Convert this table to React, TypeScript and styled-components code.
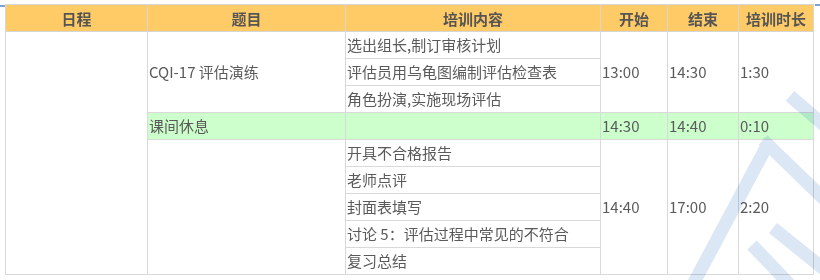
import React from 'react';
import styled, { createGlobalStyle } from 'styled-components';

type Session = {
  topic: string;
  items: string[];
  start: string;
  end: string;
  length: string;
  isBreak?: boolean;
};

const sessions: Session[] = [
  {
    topic: 'CQI-17 评估演练',
    items: ['选出组长,制订审核计划', '评估员用乌龟图编制评估检查表', '角色扮演,实施现场评估'],
    start: '13:00',
    end: '14:30',
    length: '1:30',
  },
  { topic: '课间休息', items: [''], start: '14:30', end: '14:40', length: '0:10', isBreak: true },
  {
    topic: '',
    items: ['开具不合格报告', '老师点评', '封面表填写', '讨论 5：评估过程中常见的不符合', '复习总结'],
    start: '14:40',
    end: '17:00',
    length: '2:20',
  },
];

const GlobalStyle = createGlobalStyle`
  html, body {
    margin: 0;
    background: #ffffff;
  }
  body {
    font-family: "Noto Sans CJK SC", "Noto Sans", sans-serif;
  }
`;

const Page = styled.div`
  position: relative;
  width: 820px;
  height: 280px;
  padding: 4px 0 0 5px;
  box-sizing: border-box;
  overflow: hidden;
`;

const Grid = styled.table`
  border-collapse: collapse;
  table-layout: fixed;
  width: 809px;
  font-size: 15px;
  color: #5a5a5a;
`;

const HeadCell = styled.th`
  height: 26px;
  padding: 0;
  background: #ffcb66;
  border: 1px solid #d6d6d6;
  font-weight: bold;
  color: #555555;
  text-align: center;
  white-space: nowrap;
`;

const Cell = styled.td<{ $break?: boolean }>`
  height: 26px;
  padding: 0 0 0 1px;
  border: 1px solid #d9d9d9;
  background: ${p => (p.$break ? '#ccffcc' : 'transparent')};
  white-space: nowrap;
  vertical-align: middle;
  line-height: 20px;
`;

const Watermark = styled.svg`
  position: absolute;
  inset: 0;
  pointer-events: none;
`;

const widths = [142, 198, 255, 67, 71, 75];

function App() {
  const total = sessions.reduce((n, s) => n + s.items.length, 0);

  const rows: React.ReactNode[] = [];
  let first = true;
  sessions.forEach((s, si) => {
    s.items.forEach((item, i) => {
      rows.push(
        <tr key={`${si}-${i}`}>
          {first && <Cell rowSpan={total} />}
          {i === 0 && (
            <Cell rowSpan={s.items.length} $break={s.isBreak}>
              {s.topic}
            </Cell>
          )}
          <Cell $break={s.isBreak}>{item}</Cell>
          {i === 0 && (
            <>
              <Cell rowSpan={s.items.length} $break={s.isBreak}>{s.start}</Cell>
              <Cell rowSpan={s.items.length} $break={s.isBreak}>{s.end}</Cell>
              <Cell rowSpan={s.items.length} $break={s.isBreak}>{s.length}</Cell>
            </>
          )}
        </tr>
      );
      first = false;
    });
  });

  return (
    <Page>
      <GlobalStyle />
      <Grid>
        <colgroup>
          {widths.map((w, i) => (
            <col key={i} style={{ width: w }} />
          ))}
        </colgroup>
        <thead>
          <tr>
            <HeadCell>日程</HeadCell>
            <HeadCell>题目</HeadCell>
            <HeadCell>培训内容</HeadCell>
            <HeadCell>开始</HeadCell>
            <HeadCell>结束</HeadCell>
            <HeadCell>培训时长</HeadCell>
          </tr>
        </thead>
        <tbody>{rows}</tbody>
      </Grid>
      <Watermark width="820" height="280" viewBox="0 0 820 280">
        <line x1="0" y1="6" x2="5" y2="6" stroke="#7ea3cf" strokeWidth="2" />
        <line x1="815" y1="5" x2="820" y2="5" stroke="#7ea3cf" strokeWidth="2" />
        <g stroke="#dce7f5" strokeWidth="13" fill="none" style={{ mixBlendMode: 'multiply' }}>
          <line x1="690" y1="290" x2="770" y2="140" />
          <line x1="763" y1="140" x2="825" y2="200" />
          <line x1="773" y1="228" x2="825" y2="270" />
          <line x1="752" y1="245" x2="795" y2="290" />
          <line x1="790" y1="96" x2="825" y2="126" />
        </g>
      </Watermark>
    </Page>
  );
}

export default App;
